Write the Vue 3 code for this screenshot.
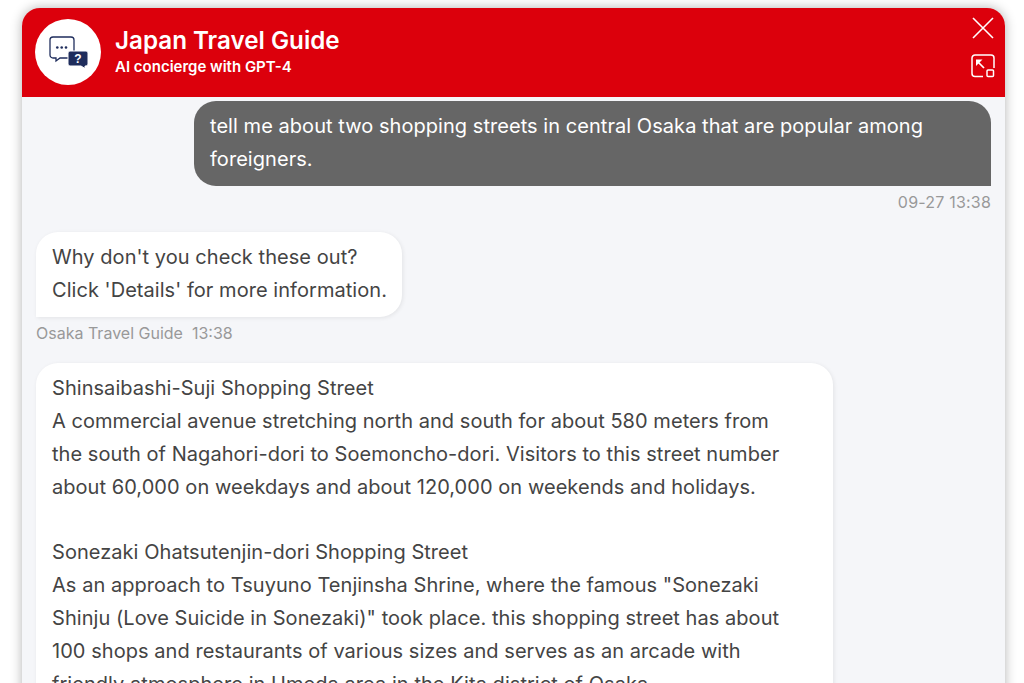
<script setup>
const lines1 = [
  "Shinsaibashi-Suji Shopping Street",
  "A commercial avenue stretching north and south for about 580 meters from",
  "the south of Nagahori-dori to Soemoncho-dori. Visitors to this street number",
  "about 60,000 on weekdays and about 120,000 on weekends and holidays.",
];
const lines2 = [
  "Sonezaki Ohatsutenjin-dori Shopping Street",
  "As an approach to Tsuyuno Tenjinsha Shrine, where the famous \"Sonezaki",
  "Shinju (Love Suicide in Sonezaki)\" took place. this shopping street has about",
  "100 shops and restaurants of various sizes and serves as an arcade with",
  "friendly atmosphere in Umeda area in the Kita district of Osaka.",
];
</script>

<template>
  <div class="page">
    <div class="chat">
      <header class="head">
        <div class="avatar">
          <svg class="logo" width="40" height="32" viewBox="0 0 40 32">
            <path d="M4 1h18a3 3 0 0 1 3 3v15a3 3 0 0 1-3 3H11l-4 3v-3H4a3 3 0 0 1-3-3V4a3 3 0 0 1 3-3z" fill="none" stroke="#1f2d5c" stroke-width="1.3" />
            <circle cx="8.3" cy="11.5" r="1.3" fill="#1f2d5c" />
            <circle cx="12.7" cy="11.5" r="1.3" fill="#1f2d5c" />
            <circle cx="17" cy="11.5" r="1.3" fill="#1f2d5c" />
            <path d="M21 15h16a2 2 0 0 1 2 2v11a2 2 0 0 1-2 2h-1v2.500l-4-2.500H21a2 2 0 0 1-2-2V17a2 2 0 0 1 2-2z" fill="#1f2d5c" stroke="#fff" stroke-width="1" />
            <text x="29" y="27" class="q">?</text>
          </svg>
        </div>
        <div class="titles">
          <div class="title">Japan Travel Guide</div>
          <div class="sub">AI concierge with GPT-4</div>
        </div>
        <div class="tools">
          <svg width="24" height="24" viewBox="0 0 24 24">
            <path d="M2 2l20 20M22 2L2 22" stroke="#fff" stroke-width="1.6" fill="none" />
          </svg>
          <svg width="24" height="24" viewBox="0 0 24 24">
            <path d="M12 22.5H4a3 3 0 0 1-3-3V4a3 3 0 0 1 3-3h16a3 3 0 0 1 3 3v10" fill="none" stroke="#fff" stroke-width="1.5" />
            <rect x="16" y="16" width="6.5" height="6.5" rx="1" fill="none" stroke="#fff" stroke-width="1.5" />
            <path d="M6.5 7.5l6.5 6.5" fill="none" stroke="#fff" stroke-width="1.7" />
            <path d="M5 5.500h6.500L5 12z" fill="#fff" />
          </svg>
        </div>
      </header>

      <div class="body">
        <div class="row-right">
          <div class="bubble mine">tell me about two shopping streets in central Osaka that are popular among foreigners.</div>
          <div class="time">09-27 13:38</div>
        </div>

        <div class="bubble theirs first">
          <div>Why don't you check these out?</div>
          <div>Click 'Details' for more information.</div>
        </div>
        <div class="meta">Osaka Travel Guide&nbsp; 13:38</div>

        <div class="bubble theirs guide">
          <div v-for="l in lines1" :key="l">{{ l }}</div>
          <div class="blank"></div>
          <div v-for="l in lines2" :key="l">{{ l }}</div>
        </div>
      </div>
    </div>
  </div>
</template>

<style scoped>
.page {
  height: 683px;
  overflow: hidden;
  padding: 8px 19px 0 22px;
  box-sizing: border-box;
  background: #fff;
  font-family: "Inter", "Liberation Sans", sans-serif;
}
.chat {
  height: 760px;
  background: #f5f6f9;
  border-radius: 18px 18px 0 0;
  box-shadow: 0 0 12px rgba(0, 0, 0, 0.3);
  overflow: hidden;
}
.head {
  height: 89px;
  background: #dc000c;
  display: flex;
  align-items: center;
  padding: 0 10px 1px 13px;
  box-sizing: border-box;
  color: #fff;
}
.avatar {
  width: 66px;
  height: 66px;
  border-radius: 50%;
  background: #fff;
  display: flex;
  align-items: center;
  justify-content: center;
  flex-shrink: 0;
}
.logo {
  margin-left: 1px;
}
.q {
  font: 700 12px "Liberation Sans", sans-serif;
  fill: #fff;
  text-anchor: middle;
}
.titles {
  margin-left: 14px;
  font-weight: 600;
  padding-bottom: 2px;
}
.title {
  font-size: 24.2px;
  line-height: 32px;
}
.sub {
  font-size: 15px;
  line-height: 20px;
}
.tools {
  margin-left: auto;
  align-self: flex-start;
  padding-top: 8px;
  display: flex;
  flex-direction: column;
  gap: 14px;
}
.body {
  padding: 4px 14px 0 14px;
  color: #444;
  font-size: 20px;
  line-height: 33px;
  letter-spacing: 0.05px;
}
.row-right {
  display: flex;
  flex-direction: column;
  align-items: flex-end;
}
.bubble {
  padding: 9px 16px 10px;
  box-sizing: border-box;
}
.mine {
  width: 797px;
  background: #666;
  color: #fff;
  border-radius: 22px 22px 0 22px;
}
.time {
  font-size: 16px;
  line-height: 20px;
  margin-top: 6px;
  color: #999;
  letter-spacing: 0.2px;
}
.theirs {
  background: #fff;
  border-radius: 22px 22px 22px 0;
  box-shadow: 1px 1px 4px rgba(0, 0, 0, 0.08);
  white-space: nowrap;
}
.first {
  width: 366px;
  margin-top: 20px;
}
.meta {
  font-size: 16px;
  line-height: 20px;
  margin-top: 6px;
  color: #999;
  letter-spacing: 0;
}
.guide {
  width: 797px;
  margin-top: 20px;
}
.blank {
  height: 32px;
}
</style>
